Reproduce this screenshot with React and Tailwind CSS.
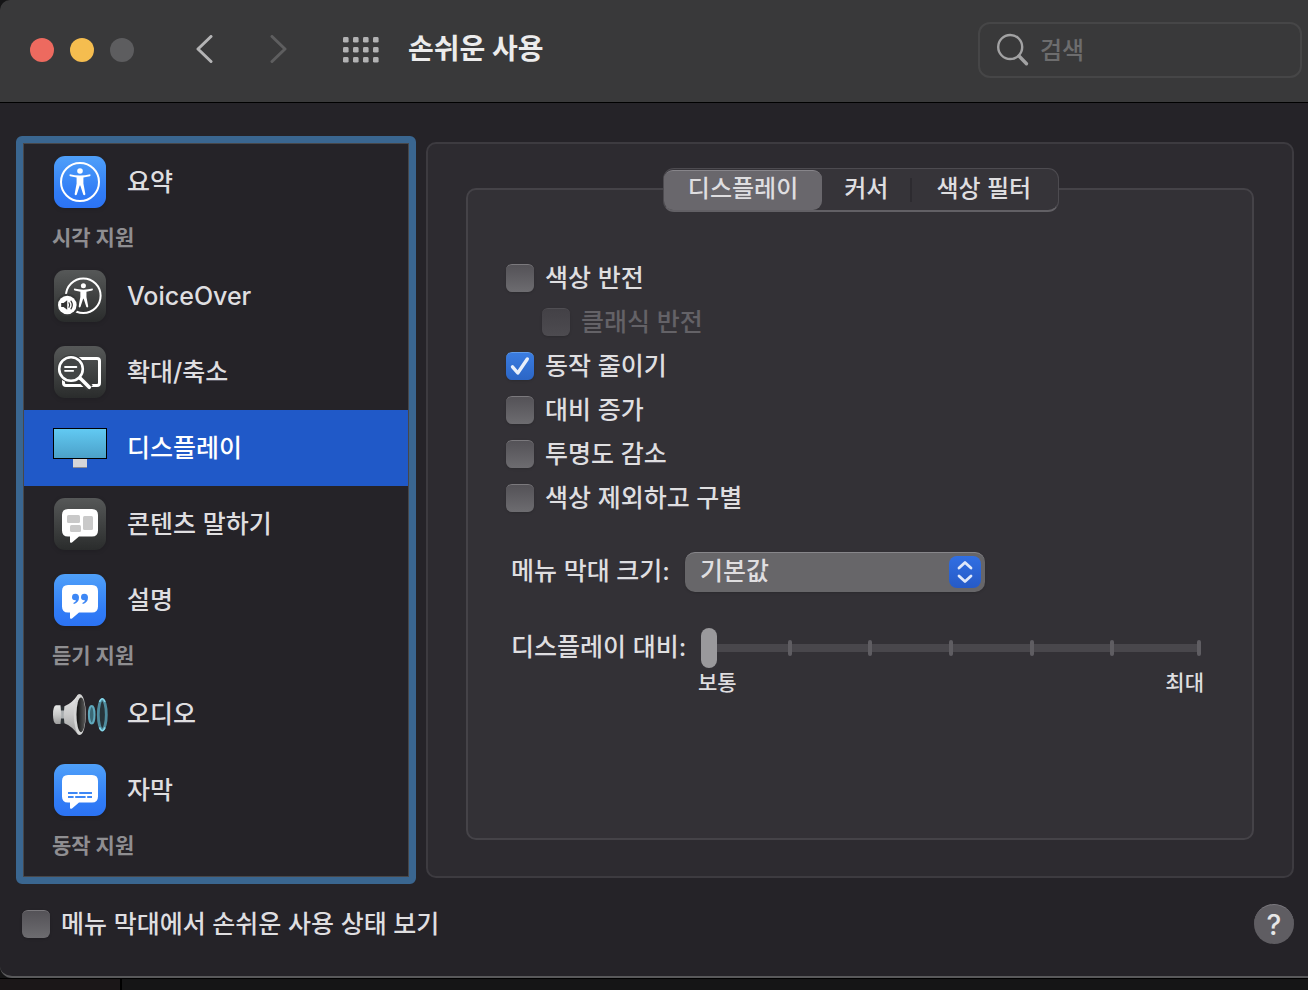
import { useState } from 'react'

const Person = () => (
  <g fill="#fff">
    <circle cx="26" cy="15" r="2.8" />
    <path d="M15.8 18.2 Q26 20.6 36.2 18.2 Q37.2 19.8 35.8 20.3 L29.4 21.6 V27.5 L31.4 38.2 Q30.6 39.8 29.3 38.8 L26.3 29.5 H25.7 L22.7 38.8 Q21.4 39.8 20.6 38.2 L22.6 27.5 V21.6 L16.2 20.3 Q14.8 19.8 15.8 18.2 Z" />
  </g>
)

const Tile = ({ gray, children }) => (
  <svg viewBox="0 0 52 52" className="h-[52px] w-[52px] drop-shadow-sm">
    <defs>
      <linearGradient id="tileBlue" x1="0" y1="0" x2="0" y2="1">
        <stop offset="0" stopColor="#4fa0f9" />
        <stop offset="0.7" stopColor="#307cf6" />
        <stop offset="1" stopColor="#2c73f4" />
      </linearGradient>
      <linearGradient id="tileGray" x1="0" y1="0" x2="0" y2="1">
        <stop offset="0" stopColor="#565858" />
        <stop offset="1" stopColor="#2a2c2c" />
      </linearGradient>
    </defs>
    <rect width="52" height="52" rx="11" fill={gray ? 'url(#tileGray)' : 'url(#tileBlue)'} />
    {children}
  </svg>
)

const Bubble = () => (
  <path
    fill="#fff"
    d="M14 11 H38 Q44 11 44 17 V32.5 Q44 38.5 38 38.5 H25 L18 44.4 Q16 45.6 16 43.5 V38.5 H14 Q8 38.5 8 32.5 V17 Q8 11 14 11 Z"
  />
)

const OverviewIcon = () => (
  <Tile>
    <circle cx="26" cy="26" r="19" fill="none" stroke="#fff" strokeWidth="2" />
    <Person />
  </Tile>
)

const VoiceOverIcon = () => (
  <Tile gray>
    <circle cx="29.3" cy="25.7" r="17.3" fill="none" stroke="#fff" strokeWidth="2" />
    <g transform="translate(6 2.2) scale(0.9)">
      <Person />
    </g>
    <circle cx="13.3" cy="35" r="11.2" fill="#363838" />
    <circle cx="13.3" cy="35" r="9.3" fill="#fff" />
    <path d="M7.2 33 H9.6 L13.2 30.2 V39.8 L9.6 37 H7.2 Z" fill="#333" />
    <path d="M15 32.8 Q16.4 35 15 37.2 M17 31.2 Q19.6 35 17 38.8" fill="none" stroke="#333" strokeWidth="1.2" strokeLinecap="round" />
  </Tile>
)

const ZoomIcon = () => (
  <Tile gray>
    <rect x="9.5" y="12.5" width="36" height="27" rx="2.5" fill="none" stroke="#fff" strokeWidth="3" />
    <circle cx="17" cy="23" r="14.2" fill="#3e4040" />
    <path d="M25 31 L36 42" stroke="#3b3d3d" strokeWidth="8" />
    <circle cx="17" cy="23" r="11.8" fill="#424444" stroke="#fff" strokeWidth="2.6" />
    <path d="M26 32 L35.3 41.3" stroke="#fff" strokeWidth="3.6" strokeLinecap="round" />
    <path d="M11 21 H22.4 M11 24.8 H19.2" stroke="#fff" strokeWidth="1.8" strokeLinecap="round" />
  </Tile>
)

const DisplayIcon = () => (
  <svg viewBox="0 0 56 52" className="h-[52px] w-14">
    <defs>
      <linearGradient id="screen" x1="0" y1="0" x2="0" y2="1">
        <stop offset="0" stopColor="#62caf3" />
        <stop offset="1" stopColor="#4ba0c8" />
      </linearGradient>
    </defs>
    <rect x="21" y="36" width="14" height="10" fill="#d6d6d8" />
    <rect x="21" y="45" width="14" height="1" fill="#8c8c92" />
    <rect x="1.5" y="6.5" width="53" height="30" fill="url(#screen)" stroke="#000" />
  </svg>
)

const SpeechIcon = () => (
  <Tile gray>
    <Bubble />
    <rect x="13" y="17" width="13" height="8" rx="1.5" fill="#c9c9c9" />
    <rect x="29" y="18" width="10" height="14" rx="1.5" fill="#c9c9c9" />
    <rect x="16" y="27" width="11" height="7" rx="1.5" fill="#c9c9c9" />
  </Tile>
)

const DescriptionIcon = () => (
  <Tile>
    <Bubble />
    <g fill="#3d87f5">
      <path id="quote" d="M21.4 19.8 Q25 19.8 25 23.6 Q25 28.4 20 30 Q18.9 29.8 19.6 28.8 Q21.8 27.8 22 26.2 Q18 26.6 18 23.2 Q18 19.8 21.4 19.8 Z" />
      <use href="#quote" x="9" />
    </g>
  </Tile>
)

const AudioIcon = () => (
  <svg viewBox="0 0 56 52" className="h-[52px] w-14">
    <defs>
      <linearGradient id="metal" x1="0" y1="0" x2="0" y2="1">
        <stop offset="0" stopColor="#e9e9e9" />
        <stop offset="0.5" stopColor="#c9c9c9" />
        <stop offset="1" stopColor="#9d9d9d" />
      </linearGradient>
      <linearGradient id="cone" x1="0" y1="0" x2="1" y2="0">
        <stop offset="0" stopColor="#111" />
        <stop offset="1" stopColor="#5c5c5c" />
      </linearGradient>
    </defs>
    <rect x="7" y="18.5" width="7" height="17" fill="#2e3336" />
    <rect x="7" y="22.5" width="7" height="8" fill="#a9adaf" />
    <path d="M4 17.3 H8.5 Q10 26.5 8.5 36 H4 Q1 35 1 26.5 Q1 18 4 17.3 Z" fill="url(#metal)" />
    <path d="M12.4 18.2 Q20 15.5 26 6.5 H28 V46.8 H26 Q20 38 12.4 35.2 Q11 26.5 12.4 18.2 Z" fill="url(#metal)" />
    <ellipse cx="27.8" cy="26.6" rx="6" ry="20.4" fill="#d5d5d5" />
    <ellipse cx="29" cy="26.8" rx="4.5" ry="17.4" fill="url(#cone)" />
    <ellipse cx="39.7" cy="26.7" rx="2.8" ry="8.8" fill="#3a6875" stroke="#5fa9bd" strokeWidth="2" />
    <ellipse cx="50.3" cy="26.7" rx="4" ry="14.8" fill="#27343a" stroke="#4f8c9e" strokeWidth="2.8" />
    <path d="M47.5 14 Q50.3 7.5 53 14 M47.5 39.4 Q50.3 46 53 39.4" fill="none" stroke="#85d8ec" strokeWidth="1.6" />
  </svg>
)

const CaptionIcon = () => (
  <Tile>
    <Bubble />
    <path d="M14 29 H23.6 M25.2 29 H38 M14 33 H19.6 M21.2 33 H31.6 M33.2 33 H38" stroke="#3d87f5" strokeWidth="1.8" />
  </Tile>
)

const items = [
  { label: '요약', Icon: OverviewIcon },
  { heading: '시각 지원' },
  { label: 'VoiceOver', Icon: VoiceOverIcon },
  { label: '확대/축소', Icon: ZoomIcon },
  { label: '디스플레이', Icon: DisplayIcon },
  { label: '콘텐츠 말하기', Icon: SpeechIcon },
  { label: '설명', Icon: DescriptionIcon },
  { heading: '듣기 지원' },
  { label: '오디오', Icon: AudioIcon },
  { label: '자막', Icon: CaptionIcon },
  { heading: '동작 지원' },
]

const options = [
  { id: 'invert', label: '색상 반전' },
  { id: 'classic', label: '클래식 반전', disabled: true },
  { id: 'motion', label: '동작 줄이기', checked: true },
  { id: 'contrast', label: '대비 증가' },
  { id: 'transparency', label: '투명도 감소' },
  { id: 'differentiate', label: '색상 제외하고 구별' },
]

// tick positions along the track, in percent
const ticks = [17.8, 33.8, 50, 66.2, 82.2, 99.6]

const Checkbox = ({ label, disabled, checked }) => (
  <label className={`flex h-11 items-center gap-[11px] ${disabled ? 'ml-9 text-[#646267]' : ''}`}>
    <span className="relative h-7 w-7 shrink-0">
      <input
        type="checkbox"
        defaultChecked={checked}
        disabled={disabled}
        className="peer block h-7 w-7 appearance-none rounded-md border-t border-[#7b797d] bg-linear-to-b from-[#545257] to-[#6d6c70] shadow-sm checked:border-[#5f9bea] checked:from-[#3a7ce0] checked:to-[#2c66c6] disabled:border-[#504e53] disabled:from-[#434146] disabled:to-[#4d4b50]"
      />
      <svg viewBox="0 0 28 28" className="pointer-events-none absolute inset-0 hidden peer-checked:block">
        <path d="M6.5 14.8 L11.8 21 L21.3 7" fill="none" stroke="#e8effa" strokeWidth="3.4" strokeLinecap="round" strokeLinejoin="round" />
      </svg>
    </span>
    <span>{label}</span>
  </label>
)

const Header = () => (
  <header className="flex h-[103px] items-center rounded-tl-[10px] border-b border-black bg-[#39393a] pb-[3px] pl-[30px] pr-1.5">
    <div className="flex gap-4">
      <button aria-label="닫기" className="h-6 w-6 rounded-full bg-[#ed6a5f]" />
      <button aria-label="최소화" className="h-6 w-6 rounded-full bg-[#f5bd4f]" />
      <button aria-label="확대" className="h-6 w-6 rounded-full bg-[#5d5d5f]" />
    </div>
    <button aria-label="뒤로" className="ml-[60px]">
      <svg viewBox="0 0 20 30" className="h-[30px] w-5">
        <path d="M17 1.5 L4 14 L17 26.5" fill="none" stroke="#b4b4b5" strokeWidth="3" strokeLinecap="round" strokeLinejoin="round" />
      </svg>
    </button>
    <button aria-label="앞으로" disabled className="ml-[55px]">
      <svg viewBox="0 0 20 30" className="h-[30px] w-5">
        <path d="M3 1.5 L16 14 L3 26.5" fill="none" stroke="#5e5e5f" strokeWidth="3" strokeLinecap="round" strokeLinejoin="round" />
      </svg>
    </button>
    <button aria-label="모두 보기" className="ml-[54px]">
      <svg viewBox="0 0 36 26" className="h-[26px] w-9" fill="#b2b2b3">
        {[0, 10, 20, 30].map((x) => [0, 10, 20].map((y) => (
          <rect key={`${x}-${y}`} x={x} y={y} width="5.6" height="5.6" rx="1.4" />
        )))}
      </svg>
    </button>
    <h1 className="ml-[29px] pb-0.5 text-[28px] font-bold leading-10 text-[#ececec]">손쉬운 사용</h1>
    <label className="ml-auto flex h-14 w-[324px] items-center rounded-xl border-2 border-[#464647] pl-4">
      <svg viewBox="0 0 34 34" className="h-[34px] w-[34px] shrink-0" fill="none" stroke="#a2a2a3" strokeLinecap="round">
        <circle cx="14.2" cy="14" r="12" strokeWidth="2.4" />
        <path d="M23 23 L30.5 30.8" strokeWidth="3.4" />
      </svg>
      <input
        type="search"
        aria-label="검색"
        placeholder="검색"
        className="ml-2.5 w-full min-w-0 bg-transparent pt-0.5 text-2xl outline-none placeholder:text-[#6d6d6e]"
      />
    </label>
  </header>
)

const Sidebar = () => {
  const [selected, setSelected] = useState('디스플레이')

  return (
    <nav className="w-[400px] shrink-0 rounded-md border-[7px] border-[#3a6690]">
      <ul className="border border-[#47474a] pb-2.5">
        {items.map(({ label, heading, Icon }) =>
          heading ? (
            <li key={heading} className="h-[38px] pl-7 text-[21px] font-bold leading-9 text-[#8f8e91]">
              {heading}
            </li>
          ) : (
            <li key={label}>
              <button
                onClick={() => setSelected(label)}
                className={`flex h-[76px] w-full items-center gap-[19px] pl-7 text-left ${selected === label ? 'bg-[#2059c8] text-white' : ''}`}
              >
                <span className="flex w-14 justify-center">
                  <Icon />
                </span>
                <span>{label}</span>
              </button>
            </li>
          )
        )}
      </ul>
    </nav>
  )
}

const DisplayPanel = () => (
  <main className="my-1.5 flex flex-1 rounded-[10px] border-2 border-[#3d3b40] bg-[#2d2b30] px-[38px] pb-9 pt-11">
    <section className="flex-1 rounded-[10px] border-2 border-[#454348] bg-[#333136] pl-[38px] pr-[51px]">
      <div className="flex justify-center pl-[26px] pr-[11px]">
        <div role="tablist" className="-mt-[22px] flex h-11 shrink-0 items-center rounded-[11px] border border-b-2 border-[#4d4b50] border-b-[#626065] bg-[#363439] text-2xl">
          <button role="tab" aria-selected="true" className="h-10 rounded-[9px] border-t border-[#87858a] bg-[#69676c] px-6 pb-0.5">
            디스플레이
          </button>
          <button role="tab" aria-selected="false" className="h-10 px-[22px] pb-0.5">
            커서
          </button>
          <span className="h-6 w-0.5 bg-[#2d2b30]" />
          <button role="tab" aria-selected="false" className="h-10 pl-6 pr-[27px] pb-0.5">
            색상 필터
          </button>
        </div>
      </div>

      <div className="pt-11">
        {options.map((o) => (
          <Checkbox key={o.id} {...o} />
        ))}
      </div>

      <div className="mt-8 flex items-center pl-[5px]">
        <label htmlFor="menubar" className="w-[174px] shrink-0 pb-0.5">
          메뉴 막대 크기:
        </label>
        <div className="relative w-[300px]">
          <select
            id="menubar"
            className="block h-10 w-full appearance-none rounded-[10px] border-t border-[#87868a] bg-[#676669] pb-1 pl-[15px] shadow"
          >
            <option>기본값</option>
            <option>크게</option>
          </select>
          <svg viewBox="0 0 32 32" className="pointer-events-none absolute right-1 top-1 h-8 w-8 rounded-lg bg-linear-to-b from-[#316fe3] to-[#265ac6]">
            <path d="M10 12 L16 6.5 L22 12 M10 20 L16 25.5 L22 20" fill="none" stroke="#dfe8fa" strokeWidth="2.8" strokeLinecap="round" strokeLinejoin="round" />
          </svg>
        </div>
      </div>

      <div className="mt-9 flex items-start pl-[5px]">
        <label htmlFor="contrast-level" className="w-[174px] shrink-0 whitespace-nowrap leading-[38px]">
          디스플레이 대비:
        </label>
        <div className="flex-1 pl-4">
          <div className="relative flex h-10 items-center">
            <span className="h-2 w-full rounded-sm bg-[#49474c]" />
            {ticks.map((t) => (
              <span key={t} className="absolute h-4 w-1 -translate-x-1/2 rounded-sm bg-[#5f5d62]" style={{ left: `${t}%` }} />
            ))}
            <input
              id="contrast-level"
              type="range"
              min="0"
              max="6"
              defaultValue="0"
              className="absolute inset-0 h-10 w-full appearance-none bg-transparent [&::-webkit-slider-thumb]:h-10 [&::-webkit-slider-thumb]:w-4 [&::-webkit-slider-thumb]:appearance-none [&::-webkit-slider-thumb]:rounded-full [&::-webkit-slider-thumb]:bg-[#9a999c]"
            />
          </div>
          <div className="-mx-[3px] flex justify-between text-[21px] leading-[30px]">
            <span>보통</span>
            <span>최대</span>
          </div>
        </div>
      </div>
    </section>
  </main>
)

const App = () => (
  <div
    lang="ko"
    className="flex min-h-screen flex-col bg-[#151516] font-['Inter','Noto_Sans_CJK_KR',sans-serif] text-[25px] leading-9 font-medium text-[#dfdee0]"
  >
    <div className="rounded-l-[12px] border-b-2 border-[#59595b] bg-[#252328]">
      <Header />
      <div className="flex gap-2.5 pl-4 pr-3.5 pt-[33px]">
        <Sidebar />
        <DisplayPanel />
      </div>
      <footer className="flex items-center justify-between pb-[30px] pl-[22px] pr-3.5 pt-[18px]">
        <Checkbox label="메뉴 막대에서 손쉬운 사용 상태 보기" />
        <button aria-label="도움말" className="h-10 w-10 rounded-full border-t border-[#7d7b80] bg-[#5f5d62] text-[28px] leading-9 text-[#e6e6e7]">
          ?
        </button>
      </footer>
    </div>
    <div className="flex min-h-3 flex-1 border-t border-black">
      <div className="w-[122px] border-r-2 border-black bg-[#1b1718]" />
    </div>
  </div>
)

export default App
